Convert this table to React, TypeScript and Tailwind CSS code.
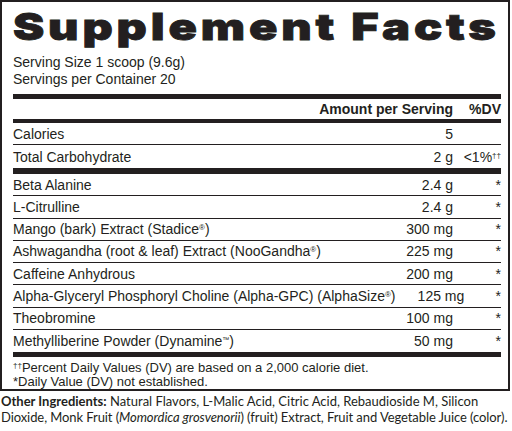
const rows: { name: React.ReactNode; amount: string }[] = [
  { name: "Beta Alanine", amount: "2.4 g" },
  { name: "L-Citrulline", amount: "2.4 g" },
  {
    name: (
      <>
        Mango (bark) Extract (Stadice<sup className="text-[8px]">®</sup>)
      </>
    ),
    amount: "300 mg",
  },
  {
    name: (
      <>
        Ashwagandha (root &amp; leaf) Extract (NooGandha<sup className="text-[8px]">®</sup>)
      </>
    ),
    amount: "225 mg",
  },
  { name: "Caffeine Anhydrous", amount: "200 mg" },
  {
    name: (
      <>
        Alpha-Glyceryl Phosphoryl Choline (Alpha-GPC) (AlphaSize<sup className="text-[8px]">®</sup>)
      </>
    ),
    amount: "125 mg",
  },
  { name: "Theobromine", amount: "100 mg" },
  {
    name: (
      <>
        Methylliberine Powder (Dynamine<sup className="text-[7px]">™</sup>)
      </>
    ),
    amount: "50 mg",
  },
];

function Row({
  name,
  amount,
  dv,
  last,
  h = "h-[22.25px]",
}: {
  name: React.ReactNode;
  amount: string;
  dv?: React.ReactNode;
  last?: boolean;
  h?: string;
}) {
  return (
    <div
      className={`flex items-center leading-none ${h} ${last ? "" : "border-b border-[#231f20]"}`}
    >
      <span className="flex-1 whitespace-nowrap">{name}</span>
      <span className="w-[90px] text-right">{amount}</span>
      <span className="w-[48px] text-right">{dv}</span>
    </div>
  );
}

export default function App() {
  return (
    <div className="w-[512px] h-[431px] overflow-hidden bg-white text-[#231f20] font-['Liberation_Sans',Arial,sans-serif]">
      <div className="w-[510px] h-[391px] border-2 border-[#231f20] pl-[11px] pr-[7px]">
        <div className="h-[48px]">
          <h1 className="w-fit origin-left scale-x-[1.27] pt-[3px] font-['Inter',sans-serif] font-black text-[37px] leading-[44px] tracking-[3px] whitespace-nowrap [-webkit-text-stroke:0.8px_#231f20]">
            Supplement Facts
          </h1>
        </div>
        <div className="text-[14px] leading-[17px] pt-[4px]">
          <p>Serving Size 1 scoop (9.6g)</p>
          <p>Servings per Container 20</p>
        </div>
        <div className="mt-[6px] h-[5px] bg-[#231f20]" />
        <div className="flex items-center h-[20px] text-[14px] font-bold leading-none">
          <span className="flex-1" />
          <span className="text-right">Amount per Serving</span>
          <span className="w-[48px] text-right">%DV</span>
        </div>
        <div className="h-[4px] bg-[#231f20]" />
        <div className="text-[14px]">
          <Row name="Calories" amount="5" h="h-[22px]" />
          <Row
            name="Total Carbohydrate"
            amount="2 g"
            h="h-[23px]"
            last
            dv={
              <>
                &lt;1%<sup className="text-[8px]">††</sup>
              </>
            }
          />
          <div className="h-[6px] bg-[#231f20]" />
          {rows.map((r, i) => (
            <Row
              key={i}
              name={r.name}
              amount={r.amount}
              dv="*"
              last={i === rows.length - 1}
            />
          ))}
          <div className="h-[5px] bg-[#231f20]" />
        </div>
        <div className="text-[13px] leading-[14px] pt-[4px]">
          <p>
            <sup className="text-[8px]">††</sup>Percent Daily Values (DV) are based on a 2,000 calorie diet.
          </p>
          <p>*Daily Value (DV) not established.</p>
        </div>
      </div>
      <div className="pt-[2px] pl-[1px] font-['Lato',sans-serif] text-[13px] leading-[16px] whitespace-nowrap">
        <p>
          <span className="font-bold">Other Ingredients:</span> Natural Flavors, L-Malic Acid, Citric Acid,
          Rebaudioside M, Silicon
        </p>
        <p className="tracking-[-0.08px]">
          Dioxide, Monk Fruit (<i>Momordica grosvenorii</i>) (fruit) Extract, Fruit and Vegetable Juice
          (color).
        </p>
      </div>
    </div>
  );
}
